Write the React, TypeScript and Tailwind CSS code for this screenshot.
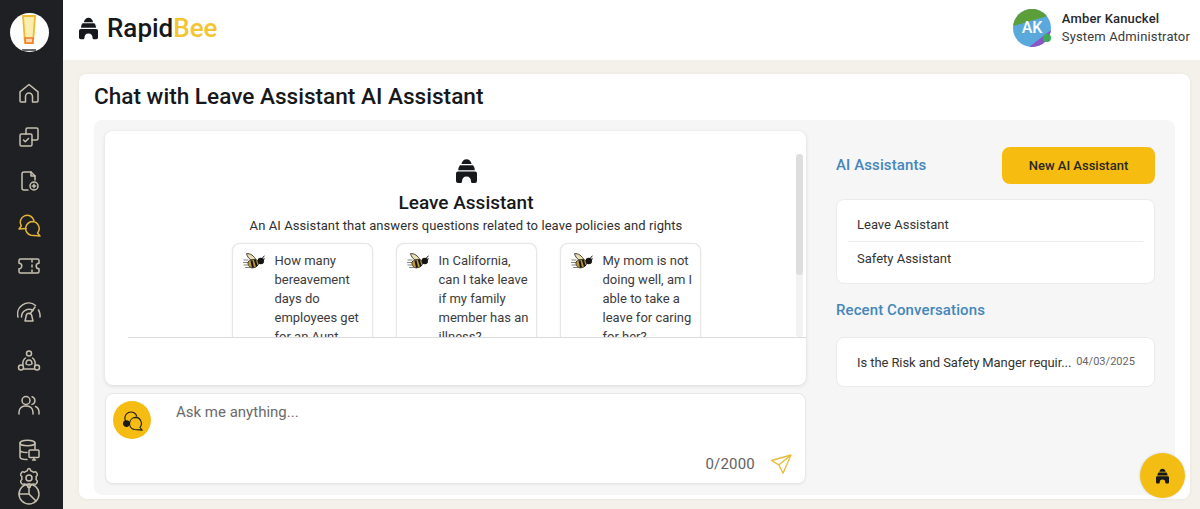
import React from "react";

const Hive = ({ className, fill = "#17181b" }: { className?: string; fill?: string }) => (
  <svg viewBox="0 0 21 24" className={`shrink-0 ${className ?? ""}`} fill={fill}>
    <path d="M5.400 5C6 2 8 .2 10.500 .2S15 2 15.600 5z" />
    <path d="M4 6.300h13c1 1.100 1.600 2.700 1.800 4.900H2.200C2.400 9 3 7.400 4 6.300z" />
    <path d="M2 12.500h17a2 2 0 0 1 2 2V22a2 2 0 0 1-2 2h-2.500a1.500 1.500 0 0 1-1.500-1.500c0-3-1.500-5-4.500-5s-4.500 2-4.500 5A1.500 1.500 0 0 1 4.500 24H2a2 2 0 0 1-2-2v-7.500a2 2 0 0 1 2-2z" />
  </svg>
);

const Bee = () => (
  <svg viewBox="0 0 22 16" className="mt-[2px] h-[16px] w-[22px] shrink-0">
    <g stroke="#77776c" strokeWidth="0.9">
      <path d="M0.500 7h5M0 9.500h5M0.500 12h5M2 14.500h5" />
    </g>
    <path d="M3.500 .7c3.500-.6 7.500 2 10 6.800-4.500 1-8.500-1.500-10-6.800z" fill="#eadfb8" stroke="#2f2b1e" strokeWidth="0.9" />
    <path d="M5 9c1.500-2.300 5-3.200 8.500-2l3 2c-1 3.500-3.500 5.700-6.500 5.800C7 15.500 4.500 12 5 9z" fill="#bd9a3c" stroke="#24221a" strokeWidth="0.8" />
    <path d="M8.500 7.500l1.500 7M11.800 6.800l2 6.500" stroke="#16150f" strokeWidth="2" />
    <circle cx="17.800" cy="8" r="3.200" fill="#151513" />
    <path d="M19 5.500l2.500-2.800M20 6.500l1.800-.8" stroke="#151513" strokeWidth="1" />
  </svg>
);

const SideIcon = ({ children, className, active }: { children: React.ReactNode; className?: string; active?: boolean }) => (
  <svg
    viewBox="0 0 24 24"
    className={`h-6 w-6 shrink-0 ${className ?? ""}`}
    fill="none"
    stroke={active ? "#e2b437" : "#c7c0ae"}
    strokeWidth="1.500"
    strokeLinecap="round"
    strokeLinejoin="round"
  >
    {children}
  </svg>
);

const Question = ({ lines }: { lines: string[] }) => (
  <div className="flex h-[110px] w-[141px] shrink-0 gap-[10px] rounded-t-lg border border-b-0 border-[#e6e6e6] bg-white pl-[10px] pt-[7px] shadow-[0_0_2px_rgba(0,0,0,0.08)]">
    <Bee />
    <div className="text-[13px] leading-[19px] text-[#3c3c3c]">
      {lines.map((l) => (
        <div key={l} className="whitespace-nowrap">{l}</div>
      ))}
    </div>
  </div>
);

export default function App() {
  return (
    <div className="flex h-[509px] w-[1200px] overflow-hidden bg-[#f3f1ea] font-['Roboto',sans-serif] text-[#17181b]">
      <aside className="flex w-[63px] shrink-0 flex-col items-center overflow-hidden bg-[#1f2024] pr-[5px]">
        <div className="relative mt-[13px] flex h-[39px] w-[39px] shrink-0 items-start justify-center overflow-hidden rounded-full bg-white pt-[2px]">
          <svg viewBox="0 0 14 30" className="h-[30px] w-[14px]">
            <path d="M1 1h12l-2 27H3z" fill="#fbeeb0" stroke="#efbb2b" strokeWidth="1.800" />
            <path d="M3 23h8l-.5 5h-7z" fill="#fbd9b0" stroke="#ef7a2e" strokeWidth="1.400" />
          </svg>
          <div className="absolute bottom-[1px] h-[2px] w-[14px] bg-[#666]" />
        </div>
        <SideIcon className="mt-[29px]">
          <path d="M3 10.800 12 3.500l9 7.300V20a1 1 0 0 1-1 1h-4.500v-5.500a3.500 3.500 0 0 0-7 0V21H4a1 1 0 0 1-1-1z" />
        </SideIcon>
        <SideIcon className="mt-[20px]">
          <rect x="3" y="9" width="12" height="12" rx="1.500" />
          <path d="M9 9V4.500A1.500 1.500 0 0 1 10.500 3h9A1.500 1.500 0 0 1 21 4.500v9a1.500 1.500 0 0 1-1.500 1.500H15" />
          <path d="m6.500 15 1.800 1.800 3.200-3.300" />
        </SideIcon>
        <SideIcon className="mt-[20px]">
          <path d="M11 21H7a2 2 0 0 1-2-2V5a2 2 0 0 1 2-2h7l4 4v4" />
          <path d="M14 3v4h4" />
          <circle cx="17" cy="17" r="4" />
          <path d="M17 15.300v3.400M15.300 17h3.400" />
        </SideIcon>
        <SideIcon active className="mt-[20px]">
          <path d="M9 15.500 2 16l2.300-3A7 7 0 1 1 17 7.500" />
          <path d="M15.500 8.500a7 7 0 0 0-1.500 13.800L23 23l-2.500-3A7 7 0 0 0 15.500 8.500z" />
        </SideIcon>
        <SideIcon className="mt-[17px]">
          <path d="M2 6.500A1.500 1.500 0 0 1 3.500 5h17A1.500 1.500 0 0 1 22 6.500v2.700a2.800 2.800 0 0 0 0 5.600v2.700a1.500 1.500 0 0 1-1.500 1.500h-17A1.500 1.500 0 0 1 2 17.500v-2.700a2.800 2.800 0 0 0 0-5.600z" />
          <path d="M15 6v2M15 11v2M15 16v2" />
        </SideIcon>
        <SideIcon className="mt-[21px]">
          <path d="M1 18A11 11 0 0 1 18.500 6.500M23 18a11 11 0 0 0-1.500-7" />
          <path d="M4.500 18a7.500 7.500 0 0 1 11.500-6.500" />
          <path d="M8 22h8l-1.200-5a2.800 2.800 0 1 0-5.600 0z" />
          <path d="M13 15l5-7" />
        </SideIcon>
        <SideIcon className="mt-[26px]">
          <circle cx="12" cy="4.500" r="2.500" />
          <circle cx="4" cy="18.500" r="2.500" />
          <circle cx="20" cy="18.500" r="2.500" />
          <path d="M8.500 9a7 7 0 0 0-2.500 7M15.500 9a7 7 0 0 1 2.500 7M7 20h10" />
          <path d="M9 15c0-2.500 1.300-4 3-4s3 1.500 3 4c-1.800 1.200-4.200 1.200-6 0z" />
        </SideIcon>
        <SideIcon className="mt-[20px]">
          <circle cx="9" cy="7.500" r="4" />
          <path d="M2 21v-2a6 6 0 0 1 6-6h2a6 6 0 0 1 6 6v2" />
          <path d="M15 3.700a4 4 0 0 1 0 7.700M18.500 13.500a6 6 0 0 1 3.500 5.500v2" />
        </SideIcon>
        <SideIcon className="mt-[21px]">
          <ellipse cx="10.500" cy="5" rx="7.500" ry="2.800" />
          <path d="M3 5v14c0 1.500 3 2.500 7 2.500M18 5v6M3 12c0 1.400 3 2.500 7 2.500" />
          <rect x="12" y="12" width="10" height="7.500" rx="1" />
          <path d="M15.500 22h3M17 19.500V22" />
        </SideIcon>
        <SideIcon className="mt-[4px]">
          <circle cx="12" cy="12" r="3" />
          <path d="M12 2.500c1 0 1.500.6 1.700 2.200 1.200.3 2 .8 2.800 1.500 1.500-.6 2.300-.6 2.800.2l1 1.700c.4.800 0 1.500-1.200 2.500.2 1 .2 2 0 2.900 1.200 1 1.600 1.700 1.200 2.500l-1 1.700c-.5.800-1.300.8-2.800.2-.8.700-1.600 1.200-2.800 1.500-.2 1.600-.7 2.200-1.700 2.200s-1.500-.6-1.700-2.200c-1.200-.3-2-.8-2.800-1.500-1.500.6-2.300.6-2.800-.2l-1-1.700c-.4-.8 0-1.500 1.200-2.500-.2-1-.2-2 0-2.900C3.700 9.600 3.300 8.900 3.700 8.100l1-1.700c.5-.8 1.300-.8 2.800-.2.800-.7 1.600-1.200 2.800-1.500.2-1.600.7-2.200 1.700-2.200z" />
        </SideIcon>
        <SideIcon className="-mt-[8px]">
          <circle cx="12" cy="12" r="10" />
          <path d="M12 2v10l7 7M12 12H2" />
        </SideIcon>
      </aside>

      <div className="flex min-w-0 flex-1 flex-col">
        <header className="flex h-[60px] shrink-0 items-center justify-between bg-white pb-[4px] pl-[16px] pr-[10px]">
          <div className="flex items-center gap-[9px]">
            <Hive className="h-[23px] w-[19px]" />
            <div className="text-[26px] font-medium leading-none">
              Rapid<span className="text-[#f2c531]">Bee</span>
            </div>
          </div>
          <div className="flex items-center gap-[11px]">
            <div className="relative h-[38px] w-[38px]">
              <svg viewBox="0 0 38 38" className="h-[38px] w-[38px] rounded-full">
                <rect width="38" height="38" fill="#5aa9dc" />
                <path d="M0 0h38v6L0 17z" fill="#5b9e3a" />
                <path d="M38 21v17H16z" fill="#8a55c4" />
                <text x="19" y="24" textAnchor="middle" fill="#fff" fontSize="16" fontWeight="500" fontFamily="Roboto, sans-serif">AK</text>
              </svg>
              <div className="absolute bottom-[5px] right-0 h-[8px] w-[8px] rounded-full bg-[#3dad55]" />
            </div>
            <div className="text-[13px] leading-[18px] tracking-[0.15px]">
              <div className="font-medium text-[#26272b]">Amber Kanuckel</div>
              <div className="text-[#3a3a3a]">System Administrator</div>
            </div>
          </div>
        </header>

        <main className="relative ml-[16px] mr-[10px] mt-[14px] flex h-[425px] flex-col rounded-lg bg-white px-[15px] shadow-[0_0_4px_rgba(0,0,0,0.05)]">
          <h1 className="mt-[9px] h-[37px] text-[22.600px] font-medium leading-[28px]">Chat with Leave Assistant AI Assistant</h1>
          <div className="flex h-[375px] gap-[30px] rounded-lg bg-[#f6f6f6] pl-[11px] pr-[20px] pt-[11px]">
            <div className="flex w-[701px] shrink-0 flex-col gap-[8px]">
              <section className="relative h-[254px] rounded-lg bg-white shadow-[0_1px_4px_rgba(0,0,0,0.12)]">
                <div className="flex h-[206px] flex-col items-center overflow-hidden pl-[21px] pt-[28px]">
                  <Hive className="h-[24px] w-[21px]" />
                  <div className="mt-[8px] text-[19px] font-medium leading-[24px]">Leave Assistant</div>
                  <div className="mt-[1px] whitespace-nowrap text-[13px] leading-[20px] tracking-[0.08px] text-[#2f2f2f]">
                    An AI Assistant that answers questions related to leave policies and rights
                  </div>
                  <div className="mt-[7px] flex gap-[23px]">
                    <Question lines={["How many", "bereavement", "days do", "employees get", "for an Aunt"]} />
                    <Question lines={["In California,", "can I take leave", "if my family", "member has an", "illness?"]} />
                    <Question lines={["My mom is not", "doing well, am I", "able to take a", "leave for caring", "for her?"]} />
                  </div>
                </div>
                <div className="absolute left-[23px] right-0 top-[206px] h-px bg-[#dcdcdc]" />
                <div className="absolute right-[3px] top-[23px] h-[183px] w-[7px] rounded-full bg-[#f2f2f2]">
                  <div className="h-[121px] w-[7px] rounded-full bg-[#dedede]" />
                </div>
              </section>
              <section className="relative flex h-[91px] gap-[25px] rounded-lg border border-[#e8e8e8] bg-white pl-[7px] pt-[7px] shadow-[0_1px_2px_rgba(0,0,0,0.05)]">
                <div className="flex h-[38px] w-[38px] shrink-0 items-center justify-center rounded-full bg-[#f5bc13]">
                  <svg viewBox="0 0 24 24" className="h-[21px] w-[21px]" fill="none" stroke="#1b1b1b" strokeWidth="1.300" strokeLinejoin="round">
                    <path d="M9 15.500 2 16l2.300-3A7 7 0 1 1 17 7.500" />
                    <path d="M15.500 8.500a7 7 0 0 0-1.500 13.800L23 23l-2.500-3A7 7 0 0 0 15.500 8.500z" />
                    <circle cx="5" cy="15.500" r="3.200" fill="#1b1b1b" />
                  </svg>
                </div>
                <div className="text-[15px] leading-[22px] text-[#6a6a6a]">Ask me anything...</div>
                <div className="absolute bottom-[8px] right-[13px] flex items-center gap-[15px]">
                  <span className="text-[15px] leading-[20px] tracking-[0.2px] text-[#5f5f5f]">0/2000</span>
                  <svg viewBox="0 0 22 22" className="h-[22px] w-[22px]" fill="none" stroke="#e8bb3a" strokeWidth="1.300" strokeLinejoin="round">
                    <path d="M21 2 1.500 7.500l7.300 4.400 4.200 8.300z" />
                    <path d="M21 2 8.800 11.900" />
                  </svg>
                </div>
              </section>
            </div>

            <div className="flex w-[319px] shrink-0 flex-col">
              <div className="mt-[16px] flex h-[37px] items-center justify-between">
                <div className="text-[15px] font-medium leading-none tracking-[0.1px] text-[#4587ba]">AI Assistants</div>
                <button className="h-[37px] w-[153px] rounded-lg bg-[#f6bc10] text-[13px] font-medium text-[#2a281f]">New AI Assistant</button>
              </div>
              <div className="mt-[15px] flex h-[85px] flex-col rounded-lg border border-[#ebebeb] bg-white px-[11px] text-[13px] text-[#333]">
                <div className="flex h-[42px] items-center border-b border-[#ececec] px-[9px] pt-[9px]">Leave Assistant</div>
                <div className="flex h-[34px] items-center px-[9px]">Safety Assistant</div>
              </div>
              <div className="mt-[17px] text-[15px] font-medium leading-[18px] tracking-[0.1px] text-[#4587ba]">Recent Conversations</div>
              <div className="mt-[18px] flex h-[50px] items-center justify-between rounded-lg border border-[#ebebeb] bg-white pl-[20px] pr-[19px] pt-[1px]">
                <span className="whitespace-nowrap text-[13px] tracking-[-0.08px] text-[#333]">Is the Risk and Safety Manger requir...</span>
                <span className="text-[11px] tracking-[0.03px] text-[#666]">04/03/2025</span>
              </div>
            </div>
          </div>
          <button className="absolute bottom-[1px] right-[5px] flex h-[45px] w-[45px] items-center justify-center rounded-full bg-[#f3bd14] shadow-[0_0_3px_rgba(0,0,0,0.15)]">
            <Hive className="h-[16px] w-[13px]" />
          </button>
        </main>
      </div>
    </div>
  );
}
